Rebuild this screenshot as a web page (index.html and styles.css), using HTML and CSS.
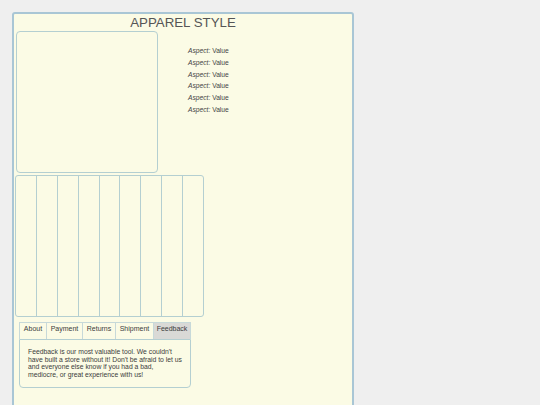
FILE: index.html
```html
<!DOCTYPE html>
<html>
<head>
<meta charset="utf-8">
<link rel="stylesheet" href="styles.css">
</head>
<body>
<div class="page">
  <div class="container">
    <h1 class="title">APPAREL STYLE</h1>
    <div class="top-row">
      <div class="image-box"></div>
      <ul class="aspects">
        <li><em>Aspect:</em> Value</li>
        <li><em>Aspect:</em> Value</li>
        <li><em>Aspect:</em> Value</li>
        <li><em>Aspect:</em> Value</li>
        <li><em>Aspect:</em> Value</li>
        <li><em>Aspect:</em> Value</li>
      </ul>
    </div>
    <div class="thumbs">
      <div class="thumb"></div><div class="thumb"></div><div class="thumb"></div>
      <div class="thumb"></div><div class="thumb"></div><div class="thumb"></div>
      <div class="thumb"></div><div class="thumb"></div><div class="thumb"></div>
    </div>
    <div class="tabs">
      <div class="tab-bar">
        <div class="tab tab-about">About</div>
        <div class="tab tab-payment">Payment</div>
        <div class="tab tab-returns">Returns</div>
        <div class="tab tab-shipment">Shipment</div>
        <div class="tab active">Feedback</div>
      </div>
      <div class="tab-panel">
        <p>Feedback is our most valuable tool. We couldn't have built a store without it! Don't be afraid to let us and everyone else know if you had a bad, mediocre, or great experience with us!</p>
      </div>
    </div>
  </div>
</div>
</body>
</html>
```

FILE: styles.css
```css
html, body {
  margin: 0;
  padding: 0;
  background: #efefef;
  font-family: "Liberation Sans", Arial, sans-serif;
  color: #444;
}
.page {
  padding: 12px 0 0 12px;
  height: 405px;
  box-sizing: border-box;
  overflow: hidden;
}
.container {
  width: 338px;
  min-height: 420px;
  border: 2px solid #a9c6d5;
  border-radius: 3px;
  background: #fbfbe5;
}
.title {
  margin: 0;
  font-size: 13.3px;
  font-weight: normal;
  line-height: 17px;
  text-align: center;
  color: #555;
}
.top-row {
  display: flex;
  align-items: flex-start;
}
.image-box {
  margin-left: 2px;
  width: 140px;
  height: 140px;
  border: 1px solid #b4cfd1;
  border-radius: 4px;
}
.aspects {
  list-style: none;
  margin: 0 0 0 30px;
  padding: 14px 0 0 0;
  font-size: 6.7px;
  line-height: 11.8px;
  color: #444;
}
.thumbs {
  display: flex;
  margin: 2px 0 0 1px;
  width: 189px;
  height: 142px;
  box-sizing: border-box;
  border: 1px solid #b4cfd1;
  border-radius: 3px;
  overflow: hidden;
}
.thumb {
  flex: 1;
  border-right: 1px solid #b4cfd1;
}
.thumb:last-child {
  border-right: none;
}
.tabs {
  margin: 5px 0 0 5px;
  width: 172px;
}
.tab-bar {
  display: flex;
  height: 17px;
  border: 1px solid #c7d9d9;
  border-bottom: none;
  box-sizing: border-box;
}
.tab {
  font-size: 7px;
  line-height: 12px;
  text-align: center;
  border-right: 1px solid #c7d9d9;
  color: #3c3c3c;
  box-sizing: border-box;
  white-space: nowrap;
}
.tab-about { width: 27px; }
.tab-payment { width: 36px; }
.tab-returns { width: 33px; }
.tab-shipment { width: 38px; }
.tab.active {
  flex: 1;
  border-right: none;
  background: #d9d9d6;
}
.tab-panel {
  height: 49px;
  box-sizing: border-box;
  border: 1px solid #b4cfd1;
  border-radius: 0 0 4px 4px;
  padding: 8px 5px 0 8px;
}
.tab-panel p {
  margin: 0;
  font-size: 6.8px;
  line-height: 7.6px;
  color: #3c3c3c;
}
```
